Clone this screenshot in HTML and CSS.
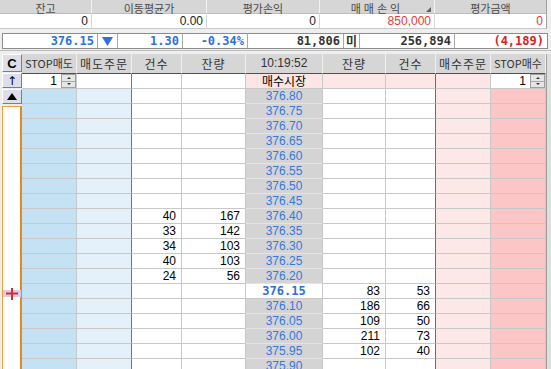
FILE: index.html
```html
<!DOCTYPE html>
<html lang="ko">
  <head>
    <meta charset="UTF-8" />
    <title>호가주문</title>
    <link rel="stylesheet" href="styles.css">
  </head>
  <body>
    <div class="summary">
      <div class="sum-head">잔고</div>
      <div class="sum-head">이동평균가</div>
      <div class="sum-head">평가손익</div>
      <div class="sum-head sort">매매손익</div>
      <div class="sum-head last">평가금액</div>
      <div class="sum-val">0</div>
      <div class="sum-val">0.00</div>
      <div class="sum-val">0</div>
      <div class="sum-val red">850,000</div>
      <div class="sum-val red last">0</div>
    </div>

    <div class="quote">
      <div class="blue">376.15</div>
      <div class="arrow">
        <svg width="11" height="9" viewBox="0 0 11 9"><polygon points="0,0 11,0 5.5,9" fill="#2f6fe0"/></svg>
      </div>
      <div class="blue">1.30</div>
      <div class="blue">-0.34%</div>
      <div>81,806</div>
      <div class="mi">미</div>
      <div>256,894</div>
      <div class="loss">(4,189)</div>
    </div>

    <div class="board">
      <div class="tools">
        <div class="tool tool-c">C</div>
        <div class="tool tool-up">↑</div>
        <div class="tool tool-tri">
          <svg width="10" height="7" viewBox="0 0 10 7"><polygon points="5,0 10,7 0,7" fill="#000"/></svg>
        </div>
        <div class="marker-panel">
          <div class="marker">
            <svg width="18" height="14" viewBox="0 0 18 14">
              <rect x="0" y="3" width="18" height="7" fill="#d9cdea"/>
              <line x1="3" y1="6.5" x2="15" y2="6.5" stroke="#d92b2b" stroke-width="2"/>
              <line x1="9" y1="1" x2="9" y2="13" stroke="#d92b2b" stroke-width="2"/>
            </svg>
          </div>
        </div>
      </div>

      <div class="book" id="book">
        <div class="bh stop">STOP매도</div>
        <div class="bh">매도주문</div>
        <div class="bh">건수</div>
        <div class="bh">잔량</div>
        <div class="bh time">10:19:52</div>
        <div class="bh">잔량</div>
        <div class="bh">건수</div>
        <div class="bh">매수주문</div>
        <div class="bh stop">STOP매수</div>

        <div class="cell spin-cell">
          <span class="spin-val">1</span>
          <span class="spin"><i class="up"></i><i class="down"></i></span>
        </div>
        <div class="cell s-ord-line"></div>
        <div class="cell"></div>
        <div class="cell"></div>
        <div class="cell market">매수시장</div>
        <div class="cell pink"></div>
        <div class="cell pink b-cnt"></div>
        <div class="cell pink"></div>
        <div class="cell spin-cell">
          <span class="spin-val">1</span>
          <span class="spin"><i class="up"></i><i class="down"></i></span>
        </div>
      </div>

      <div class="edge"></div>
    </div>

    <script>
      const sell = {
        '376.40': [40, 167],
        '376.35': [33, 142],
        '376.30': [34, 103],
        '376.25': [40, 103],
        '376.20': [24, 56]
      };
      const buy = {
        '376.15': [83, 53],
        '376.10': [186, 66],
        '376.05': [109, 50],
        '376.00': [211, 73],
        '375.95': [102, 40]
      };

      const book = document.getElementById('book');
      let rows = '';
      for (let i = 0; i < 19; i++) {
        const price = (376.80 - i * 0.05).toFixed(2);
        const s = sell[price] || ['', ''];
        const b = buy[price] || ['', ''];
        const now = price === '376.15' ? ' now' : '';
        rows += `
          <div class="cell s-stop"></div>
          <div class="cell s-ord"></div>
          <div class="cell">${s[0]}</div>
          <div class="cell">${s[1]}</div>
          <div class="cell price${now}">${price}</div>
          <div class="cell">${b[0]}</div>
          <div class="cell b-cnt">${b[1]}</div>
          <div class="cell b-ord"></div>
          <div class="cell b-stop"></div>`;
      }
      book.insertAdjacentHTML('beforeend', rows);
    </script>
  </body>
</html>
```

FILE: styles.css
```css
* {
  margin: 0;
  padding: 0;
  box-sizing: border-box;
}

body {
  width: 551px;
  height: 369px;
  overflow: hidden;
  background: #eeeeee;
  font-family: "Liberation Sans", "Noto Sans CJK KR", sans-serif;
  font-size: 12px;
  color: #000;
}

/* 상단 잔고 요약 */
.summary {
  display: grid;
  grid-template-columns: 92px 115px 113px 115px 112px;
  grid-template-rows: 14px 15px;
  width: 547px;
}

.sum-head {
  position: relative;
  background: #d6d6d6;
  border-right: 1px solid #f2f2f2;
  border-bottom: 1px solid #bdbdbd;
  padding-top: 2px;
  text-align: center;
  font-family: "Noto Sans CJK KR", sans-serif;
  font-size: 11px;
  line-height: 12px;
  color: #4a4a4a;
}

.sum-head.sort {
  letter-spacing: 3px;
}

.sum-head.sort::after {
  content: "";
  position: absolute;
  right: 3px;
  bottom: 1px;
  border-left: 5px solid transparent;
  border-bottom: 5px solid #606060;
}

.sum-val {
  background: #fff;
  border-right: 1px solid #d6d6d6;
  border-bottom: 1px solid #c8c8c8;
  text-align: right;
  padding-right: 3px;
  line-height: 14px;
  color: #222;
}

.summary .last {
  border-right-color: #a0a0a0;
}

.red {
  color: #e23b3b;
}

/* 현재가 라인 */
.quote {
  display: grid;
  grid-template-columns: 95px 20px 65px 65px 96px 16px 95px 92px;
  width: 546px;
  margin: 4px 0 0 2px;
  border: 1px solid #8c8c8c;
  background: #fff;
  font-family: "DejaVu Sans Mono", monospace;
  font-weight: bold;
  font-size: 12px;
}

.quote > div {
  height: 14px;
  line-height: 14px;
  border-right: 1px solid #a8a8a8;
  text-align: right;
  padding-right: 3px;
  color: #333;
}

.quote > div:last-child {
  border-right: none;
}

.quote .blue {
  color: #2f6fe0;
}

.quote .arrow {
  display: flex;
  align-items: center;
  justify-content: center;
  padding: 0;
}

.quote .mi {
  font-family: "Noto Sans CJK KR", sans-serif;
  text-align: center;
  padding: 0;
}

.quote .loss {
  color: #d62222;
}

/* 호가판 */
.board {
  display: flex;
  height: 320px;
  margin-top: 1px;
  border-top: 1px solid #bcbcbc;
  padding-top: 3px;
}

.tools {
  display: flex;
  flex-direction: column;
  width: 22px;
  padding-left: 2px;
}

.tool {
  display: flex;
  align-items: center;
  justify-content: center;
  height: 15px;
  margin-top: 1px;
  background: #dedeea;
  border: 1px solid #fff;
  border-right-color: #7c7c90;
  border-bottom-color: #7c7c90;
}

.tool-c {
  height: 18px;
  margin-top: 0;
  font-weight: bold;
  font-size: 13px;
}

.tool-up {
  font-family: "DejaVu Sans", sans-serif;
  font-size: 12px;
}

.marker-panel {
  flex: 1;
  margin-top: 2px;
  background: #fff;
  border: 1px solid #f2a13a;
  border-right: 2px solid #e48a1c;
}

.marker {
  height: 14px;
  margin-top: 180px;
}

.marker svg {
  display: block;
}

.book {
  display: grid;
  grid-template-columns: 55px 55px 50px 64px 77px 63px 50px 55px 55px;
  grid-template-rows: 20px;
  grid-auto-rows: 15px;
  align-content: start;
  width: 524px;
}

.bh {
  background: #d6d6d6;
  border-right: 1px solid #f0f0f0;
  border-bottom: 1px solid #505050;
  text-align: center;
  line-height: 19px;
  font-family: "Noto Sans CJK KR", sans-serif;
  letter-spacing: 1px;
  color: #333;
  white-space: nowrap;
}

.bh.stop {
  font-size: 11px;
  letter-spacing: 0;
}

.bh.time {
  font-family: "Liberation Sans", sans-serif;
  letter-spacing: 0;
}

.cell {
  background: #fff;
  border-right: 1px solid #c8c8c8;
  border-bottom: 1px solid #c8c8c8;
  line-height: 14px;
  text-align: right;
  padding-right: 5px;
  white-space: nowrap;
}

.s-stop {
  background: #c4e2f4;
}

.s-ord {
  background: #e4f1fb;
  border-right-color: #3a7ee6;
}

.s-ord-line {
  border-right-color: #3a7ee6;
}

.price {
  background: #d4d4d4;
  border-bottom-color: #e4e4e4;
  color: #3478e0;
  text-align: center;
  padding: 0;
}

.price.now {
  background: #fff;
  border-bottom-color: #c8c8c8;
  font-family: "DejaVu Sans Mono", monospace;
  font-weight: bold;
  color: #2f6fe0;
}

.market {
  background: #fde5e5;
  font-family: "Noto Sans CJK KR", sans-serif;
  text-align: center;
  padding: 0;
}

.pink {
  background: #fde6e6;
}

.b-cnt {
  border-right-color: #e03a3a;
}

.b-ord {
  background: #fde8e8;
}

.b-stop {
  background: #fdc6c6;
}

.spin-cell {
  display: flex;
  padding: 0;
}

.spin-val {
  flex: 1;
  text-align: right;
  padding-right: 4px;
}

.spin {
  display: flex;
  flex-direction: column;
  width: 15px;
  border: 1px solid #a0a0a0;
  background: #e6e6e6;
}

.spin i {
  flex: 1;
  display: flex;
  align-items: center;
  justify-content: center;
}

.spin i + i {
  border-top: 1px solid #a8a8a8;
}

.spin .up::after {
  content: "";
  border-left: 2px solid transparent;
  border-right: 2px solid transparent;
  border-bottom: 2px solid #333;
}

.spin .down::after {
  content: "";
  border-left: 2px solid transparent;
  border-right: 2px solid transparent;
  border-top: 2px solid #333;
}

.edge {
  width: 5px;
  background: #dedede;
  border-left: 1px solid #a0a0a0;
}
```
